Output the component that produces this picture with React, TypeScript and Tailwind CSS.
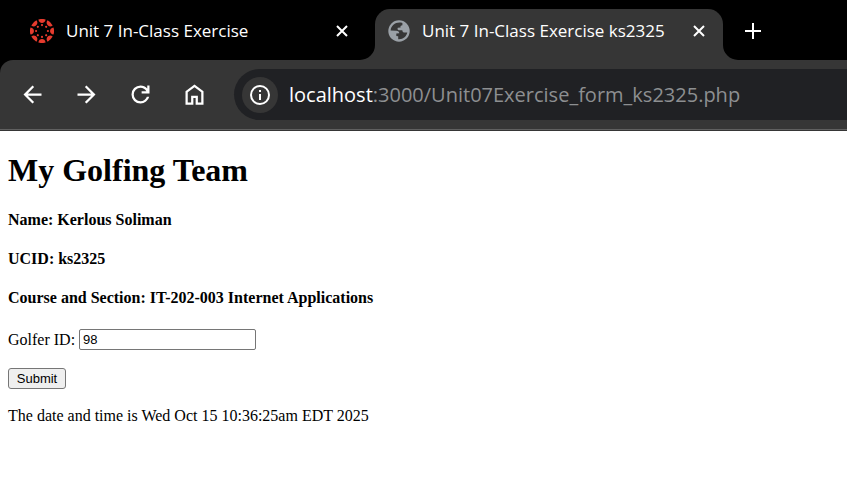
import { useState } from "react";
import type { ReactNode } from "react";

const BACK = "M20 11H7.83l5.59-5.59L12 4l-8 8 8 8 1.41-1.41L7.83 13H20v-2z";
const FORWARD = "M4 13h12.17l-5.59 5.59L12 20l8-8-8-8-1.41 1.41L16.17 11H4v2z";
const RELOAD =
  "M12 20q-3.35 0-5.68-2.32Q4 15.35 4 12t2.32-5.68Q8.65 4 12 4q1.73 0 3.3.71 1.58.71 2.7 2.04V4h2v7h-7V9h4.2q-.8-1.4-2.19-2.2Q13.63 6 12 6 9.5 6 7.75 7.75T6 12t1.75 4.25T12 18q1.93 0 3.48-1.1T17.65 14h2.1q-.7 2.65-2.85 4.33Q14.75 20 12 20z";
const HOME = "M6 19h3v-6h6v6h3v-9l-6-4.5L6 10v9zm-2 2V9l8-6 8 6v12h-7v-6h-2v6H4z";
const CLOSE = "M3 3l10 10M13 3L3 13";

function Icon({ path, label }: { path: string; label: string }) {
  return (
    <button type="button" aria-label={label} className="flex size-[27px] items-center justify-center">
      <svg viewBox="0 0 24 24" className="size-[27px] fill-white">
        <path d={path} />
      </svg>
    </button>
  );
}

function Close() {
  return (
    <button type="button" aria-label="Close tab" className="shrink-0">
      <svg viewBox="0 0 16 16" className="size-4 fill-none stroke-white stroke-2">
        <path d={CLOSE} />
      </svg>
    </button>
  );
}

function CanvasLogo() {
  const turns = [0, 45, 90, 135, 180, 225, 270, 315];
  return (
    <svg viewBox="-12 -12 24 24" className="size-6 shrink-0 fill-[#e63b2e]">
      {turns.map((turn) => (
        <g key={turn} transform={`rotate(${turn})`}>
          <path d="M-3.600-11.500A12 12 0 0 1 3.600-11.500C3.200-6.900-3.200-6.900-3.600-11.500z" />
          <circle cx="0" cy="-5.900" r="1.100" />
        </g>
      ))}
    </svg>
  );
}

function Globe() {
  return (
    <svg viewBox="0 0 22 22" className="size-[22px] shrink-0">
      <circle cx="11" cy="11" r="10.7" fill="#9aa0a6" />
      <path
        fill="#363636"
        d="M11.500 2.600C6.800 2.600 3 6 2.600 10.600L8.200 10.800C10.300 10.900 11.200 12 11.300 13.200L8.300 13.400V16L10.200 16.300V19.200C15 19.600 18.600 16.600 19.300 12.600L16 12.500C14.900 12.400 14.400 11.500 14.300 10.300L10.600 10.200C9.500 10 9.300 8.700 9.800 7.800L12.600 7.500C12.300 6.500 12.500 5.700 13.500 5.500L14.400 5.200V3.100C13.500 2.700 12.500 2.600 11.500 2.600z"
      />
    </svg>
  );
}

function Heading({ children }: { children: ReactNode }) {
  return <h4 className="mb-[21px] text-base leading-[18px] font-bold">{children}</h4>;
}

export default function App() {
  const [golfer, setGolfer] = useState("98");

  return (
    <div className="min-h-screen bg-white">
      <header className="bg-black font-['Open_Sans','Noto_Sans',sans-serif] text-white">
        <div className="flex h-[60px] items-end">
          <div className="flex h-[51px] w-[375px] items-center pr-[25px] pb-2 pl-[30px]">
            <CanvasLogo />
            <span className="ml-3 flex-1 text-[17px] leading-6 whitespace-nowrap">Unit 7 In-Class Exercise</span>
            <Close />
          </div>
          <div className="relative flex h-[51px] w-[348px] items-center rounded-t-[15px] bg-[#363636] pr-4 pb-2 pl-[13px]">
            <svg viewBox="0 0 15 15" className="absolute bottom-0 -left-[15px] size-[15px] fill-[#363636]">
              <path d="M15 0v15H0A15 15 0 0 0 15 0z" />
            </svg>
            <svg viewBox="0 0 15 15" className="absolute -right-[15px] bottom-0 size-[15px] fill-[#363636]">
              <path d="M0 0v15h15A15 15 0 0 1 0 0z" />
            </svg>
            <Globe />
            <span className="ml-3 flex-1 text-[17px] leading-6 whitespace-nowrap">Unit 7 In-Class Exercise ks2325</span>
            <Close />
          </div>
          <div className="flex h-[51px] items-center pb-2 pl-[22px]">
            <button type="button" aria-label="New tab">
              <svg viewBox="0 0 16 16" className="size-4 fill-none stroke-white stroke-2">
                <path d="M8 0v16M0 8h16" />
              </svg>
            </button>
          </div>
        </div>
        <div className="rounded-tl-[13px] bg-[#363636] pb-px">
          <div className="flex h-[70px] items-center gap-[27px] border-b border-[#606060] pl-[19px]">
            <Icon path={BACK} label="Back" />
            <Icon path={FORWARD} label="Forward" />
            <Icon path={RELOAD} label="Reload" />
            <Icon path={HOME} label="Home" />
            <div className="-ml-px flex h-[51px] min-w-0 flex-1 items-center rounded-l-full bg-[#202124] pl-2">
              <button
                type="button"
                aria-label="Site information"
                className="flex size-9 shrink-0 items-center justify-center rounded-full bg-[#363636]"
              >
                <svg viewBox="0 0 24 24" className="size-6 fill-white">
                  <path d="M11 7h2v2h-2zm0 4h2v6h-2zm1-9a10 10 0 1 0 0 20 10 10 0 0 0 0-20zm0 18a8 8 0 1 1 0-16 8 8 0 0 1 0 16z" />
                </svg>
              </button>
              <a href="#" className="ml-[11px] text-[20px] leading-7 whitespace-nowrap text-[#8d8f91]">
                <span className="text-white">localhost</span>:3000/Unit07Exercise_form_ks2325.php
              </a>
            </div>
          </div>
        </div>
      </header>
      <main className="px-2 pt-[21px] font-['Liberation_Serif',serif] text-base text-black">
        <h1 className="mb-[22px] text-[32px] leading-[37px] font-bold">My Golfing Team</h1>
        <Heading>Name: Kerlous Soliman</Heading>
        <Heading>UCID: ks2325</Heading>
        <Heading>Course and Section: IT-202-003 Internet Applications</Heading>
        <form className="pt-px" onSubmit={(event) => event.preventDefault()}>
          <div className="flex items-center gap-1">
            <label htmlFor="golfer" className="leading-[18px]">
              Golfer ID:
            </label>
            <input
              id="golfer"
              type="text"
              value={golfer}
              onChange={(event) => setGolfer(event.target.value)}
              className="h-[21px] w-[177px] rounded-[2px] border border-[#767676] px-[3px] font-['Liberation_Sans',sans-serif] text-[13px]"
            />
          </div>
          <button
            type="submit"
            className="mt-[18px] block h-[21px] w-[58px] rounded-[3px] border border-[#767676] bg-[#efefef] text-center font-['Liberation_Sans',sans-serif] text-[13px] leading-[19px]"
          >
            Submit
          </button>
        </form>
        <p className="mt-[18px] leading-[18px]">The date and time is Wed Oct 15 10:36:25am EDT 2025</p>
      </main>
    </div>
  );
}
